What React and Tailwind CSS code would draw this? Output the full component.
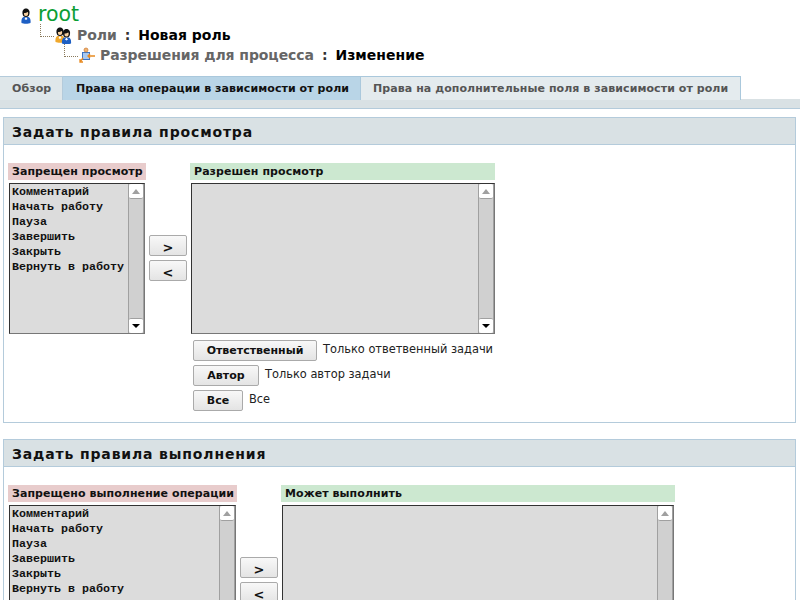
const operations = ["Комментарий", "Начать работу", "Пауза", "Завершить", "Закрыть", "Вернуть в работу"];

function UserIcon({ x = 0, y = 0, shirt = "#1d5fc4", skin = "#f5cfa0" }) {
  return (
    <g transform={`translate(${x} ${y})`}>
      <path d="M.5 15c-.5-4 1-6 2.500-6h4c1.500 0 3 2 2.500 6-2 1-7 1-9 0z" fill={shirt} />
      <path d="M5 9l1.500 2L5 12 3.500 11z" fill="#fff" />
      <path d="M1.500 5.500C1 2 3 .5 5 .5s4 1.500 3.500 5c-.3 2-.8 3.500-3.500 3.500S1.800 7.500 1.500 5.500z" fill="#111" />
      <path d="M3 5c1.500 0 3-.5 4-1 .5 2 0 4-2 4S3 7 3 5z" fill={skin} />
    </g>
  );
}

function TreeRow({ icon, label, value, className }) {
  return (
    <div className={`relative flex items-center ${className}`}>
      <span className="absolute left-[-15px] top-[-1px] w-[14px] h-[13px] border-l border-b border-dotted border-[#8a7a5c]"></span>
      {icon}
      <span className="ml-[5px] tracking-[-0.080px] text-[#666666]">{label}</span>
      <span className="mx-[8px] text-[#333333]">:</span>
      <span className="text-black">{value}</span>
    </div>
  );
}

function ArrowUp({ color }) {
  return (
    <svg width="8" height="5" viewBox="0 0 8 5">
      <path d="M4 0l4 5H0z" fill={color} />
    </svg>
  );
}

function ArrowDown() {
  return (
    <svg width="8" height="4" viewBox="0 0 8 4">
      <path d="M0 0h8L4 4z" fill="#000" />
    </svg>
  );
}

function ListBox({ items = [], className }) {
  return (
    <div className={`flex border border-t-[#333333] border-l-[#333333] border-r-[#777777] border-b-[#777777] bg-[#dcdcdc] ${className}`}>
      <ul className="flex-1 pl-[2px] pt-[1px] font-['Liberation_Mono',monospace] text-[11.670px] leading-[15px] font-bold text-[#111]">
        {items.map((item) => (
          <li key={item} className="whitespace-nowrap">{item}</li>
        ))}
      </ul>
      <div className="flex flex-col justify-between w-[16px] bg-[#d0d0d0] border-l border-[#a0a0a0] border-r border-r-[#a0a0a0]">
        <div className="flex items-center justify-center h-[15px] bg-white rounded-[2px] border-b border-[#a0a0a0]">
          <ArrowUp color="#a0a0a0" />
        </div>
        <div className="flex items-center justify-center h-[15px] bg-white rounded-[2px] border-t border-[#a0a0a0]">
          <ArrowDown />
        </div>
      </div>
    </div>
  );
}

function Button({ children, className }) {
  return (
    <button className={`h-[21px] pt-[2px] border border-[#aaaaaa] rounded-[2px] bg-linear-to-b from-[#f8f8f8] to-[#e4e4e4] font-bold text-[#111] ${className}`}>
      {children}
    </button>
  );
}

function MoveButtons({ className }) {
  return (
    <div className={`flex flex-col gap-[4px] ${className}`}>
      <Button className="w-[38px] text-[13px]">&gt;</Button>
      <Button className="w-[38px] text-[13px]">&lt;</Button>
    </div>
  );
}

function Section({ title, className, children }) {
  return (
    <section className={`mx-[3px] mr-[4px] border border-[#b4cbdb] ${className}`}>
      <h2 className="h-[27px] pl-[8px] pt-[1px] bg-[#d9e1e4] border-b border-[#b4cbdb] text-[14px] leading-[27px] font-bold tracking-[0.850px] text-[#111]">{title}</h2>
      {children}
    </section>
  );
}

function ColumnLabel({ children, className }) {
  return (
    <div className={`h-[17px] pl-[4px] text-[11px] font-bold leading-[18px] tracking-[0.070px] text-[#111] whitespace-nowrap ${className}`}>
      {children}
    </div>
  );
}

const roleRows = [
  { name: "Ответственный", width: "w-[124px]", text: "Только ответвенный задачи" },
  { name: "Автор", width: "w-[66px]", text: "Только автор задачи" },
  { name: "Все", width: "w-[50px]", text: "Все" },
];

export default function App() {
  return (
    <div className="h-[600px] overflow-hidden bg-white font-['DejaVu_Sans',sans-serif]">
      <header className="h-[76px] text-[14px] font-bold leading-[20px]">
        <div className="flex items-center h-[20px] ml-[21px] pt-[4px] box-content">
          <svg className="mt-[3px]" width="11" height="16" viewBox="0 0 11 16"><UserIcon /></svg>
          <span className="ml-[6px] text-[20.500px] font-normal text-[#0b9e34] leading-[14px]">root</span>
        </div>
        <TreeRow
          className="ml-[55px] mt-[1px]"
          label="Роли"
          value="Новая роль"
          icon={
            <svg width="17" height="17" viewBox="0 0 17 17">
              <UserIcon x={0} shirt="#f0a82c" />
              <UserIcon x={6.500} y={1.500} />
            </svg>
          }
        />
        <TreeRow
          className="ml-[79px]"
          label="Разрешения для процесса"
          value="Изменение"
          icon={
            <svg width="16" height="16" viewBox="0 0 16 16">
              <rect x="3.500" y="5.500" width="7" height="7" fill="#a8c8f0" stroke="#3d74c4" />
              <circle cx="7" cy="3" r="2" fill="#f0b070" stroke="#c87a30" strokeWidth="0.700" />
              <path d="M9 9h7M11 7l-2 2 2 2M4 11l-3 4M1 12v3h3" stroke="#e88a20" strokeWidth="1.300" fill="none" />
            </svg>
          }
        />
      </header>

      <nav className="h-[33px] border-b border-[#b4cbdb] bg-[linear-gradient(#fff_23px,#d9e1e4_23px)]">
        <div className="flex h-[24px] text-[11px] font-bold leading-[23px] tracking-[0.070px]">
          <div className="w-[63px] pl-[12px] bg-[#dfe7ea] border-t border-r border-[#b4cbdb] text-[#555]">Обзор</div>
          <div className="w-[298px] pl-[13px] bg-[#b9d5e7] border-t border-r border-[#aac8dc] text-[#111]">Права на операции в зависимости от роли</div>
          <div className="w-[380px] pl-[12px] bg-[#e4ebee] border-t border-r border-[#aac8dc] text-[#555] whitespace-nowrap">Права на дополнительные поля в зависимости от роли</div>
        </div>
      </nav>

      <Section title="Задать правила просмотра" className="mt-[8px] h-[306px]">
        <div className="flex pl-[4px] pt-[18px]">
          <div className="w-[138px]">
            <ColumnLabel className="bg-[#e8cccc]">Запрещен просмотр</ColumnLabel>
            <ListBox items={operations} className="w-[136px] h-[151px] ml-[1px] mt-[3px]" />
          </div>
          <MoveButtons className="ml-[3px] mt-[72px]" />
          <div className="w-[305px] ml-[3px]">
            <ColumnLabel className="bg-[#cce8d0]">Разрешен просмотр</ColumnLabel>
            <ListBox className="w-[304px] h-[151px] ml-[1px] mt-[3px]" />
            <div className="flex flex-col gap-[4px] ml-[3px] mt-[6px]">
              {roleRows.map((row) => (
                <div key={row.name} className="flex items-start">
                  <Button className={`text-[11px] ${row.width}`}>{row.name}</Button>
                  <span className="ml-[6px] text-[11.400px] leading-[19px] text-[#222] whitespace-nowrap">{row.text}</span>
                </div>
              ))}
            </div>
          </div>
        </div>
      </Section>

      <Section title="Задать правила выполнения" className="mt-[16px] h-[300px]">
        <div className="flex pl-[4px] pt-[18px]">
          <div className="w-[229px]">
            <ColumnLabel className="bg-[#e8cccc]">Запрещено выполнение операции</ColumnLabel>
            <ListBox items={operations} className="w-[227px] h-[151px] ml-[1px] mt-[3px]" />
          </div>
          <MoveButtons className="ml-[3px] mt-[72px]" />
          <div className="w-[394px] ml-[3px]">
            <ColumnLabel className="bg-[#cce8d0]">Может выполнить</ColumnLabel>
            <ListBox className="w-[392px] h-[151px] ml-[1px] mt-[3px]" />
          </div>
        </div>
      </Section>
    </div>
  );
}
